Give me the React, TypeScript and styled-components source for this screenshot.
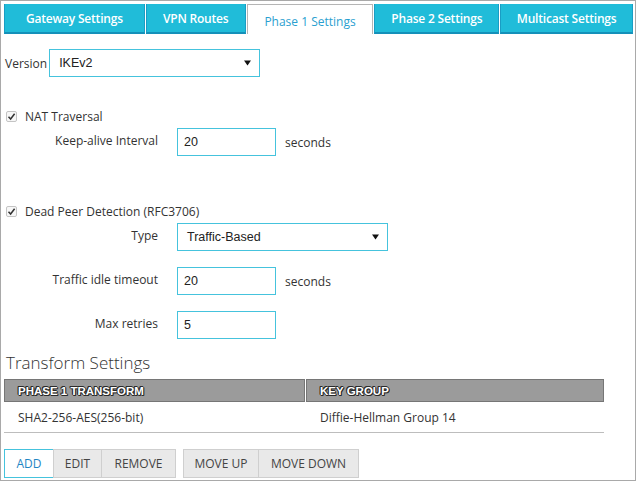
import React from "react";
import styled, { createGlobalStyle } from "styled-components";

const Global = createGlobalStyle`
  html, body { margin: 0; padding: 0; background: #fff; }
  * { box-sizing: border-box; }
`;

const Frame = styled.div`
  width: 636px;
  height: 481px;
  border: 1px solid #a9a9a9;
  padding: 3px 2px 0 3px;
  font-family: "Open Sans", "Liberation Sans", sans-serif;
  font-size: 12px;
  color: #333;
  overflow: hidden;
`;

const TabBar = styled.div`
  display: flex;
  gap: 1px;
  height: 30px;
`;

const Tab = styled.div<{ $w: number; $active?: boolean }>`
  width: ${(p) => p.$w}px;
  display: flex;
  align-items: center;
  justify-content: center;
  font-size: 12px;
  ${(p) =>
    p.$active
      ? `
    background: #fff;
    color: #2a9fd0;
    font-weight: 400;
    border: 1px solid #b5b5b5;
    border-bottom: none;
    padding-top: 3px;
  `
      : `
    background: #20bcd9;
    color: #fff;
    font-weight: 600;
    border: 1px solid #1a9dc4;
    border-top: none;
    border-bottom: 2px solid #1590b9;
    letter-spacing: -0.2px;
  `}
`;

const Content = styled.div``;

const Row = styled.div<{ $mt: number }>`
  display: flex;
  align-items: center;
  margin-top: ${(p) => p.$mt}px;
`;

const Label = styled.span`
  font-size: 12px;
  color: #333;
  margin-right: 2px;
  margin-left: 1px;
`;

const FieldLabel = styled.span`
  width: 154px;
  text-align: right;
  font-size: 12px;
  color: #333;
  margin-right: 19px;
  padding-bottom: 4px;
`;

const SelectBox = styled.div<{ $w: number }>`
  width: ${(p) => p.$w}px;
  height: 28px;
  border: 1px solid #45c3dd;
  display: flex;
  align-items: center;
  justify-content: space-between;
  padding: 0 8px 0 9px;
  font-family: "Liberation Sans", Arial, sans-serif;
  font-size: 12.5px;
  color: #222;
`;

const TextBox = styled.div`
  width: 99px;
  height: 28px;
  border: 1px solid #45c3dd;
  display: flex;
  align-items: center;
  padding-left: 6px;
  font-family: "Liberation Sans", Arial, sans-serif;
  font-size: 12.5px;
  color: #222;
`;

const Unit = styled.span`
  margin-left: 9px;
  font-size: 12px;
  color: #333;
`;

const Check = styled.span`
  width: 11px;
  height: 11px;
  border: 1px solid #c4c4c4;
  border-radius: 2px;
  background: #f7f7f7;
  display: inline-flex;
  align-items: center;
  justify-content: center;
  margin-right: 8px;
  margin-left: 2px;
`;

const CheckText = styled.span`
  font-size: 12px;
  color: #333;
`;

const Heading = styled.div`
  margin-top: 13px;
  margin-left: 2px;
  font-size: 17px;
  font-weight: 300;
  color: #333;
  line-height: 22px;
`;

const Table = styled.div`
  margin-top: 5px;
  width: 600px;
`;

const HeadRow = styled.div`
  display: grid;
  grid-template-columns: 301px 1fr;
  gap: 1px;
  height: 23px;
`;

const HeadCell = styled.div`
  background: #9b9b9b;
  border: 1px solid #767676;
  display: flex;
  align-items: center;
  padding-left: 13px;
  font-family: "Liberation Sans", Arial, sans-serif;
  font-weight: 700;
  font-size: 11.5px;
  color: #fff;
  text-shadow: 1px 0 0 #2a2a2a, -1px 0 0 #2a2a2a, 0 1px 0 #2a2a2a, 0 -1px 0 #2a2a2a,
    1px 1px 0 #2a2a2a, -1px -1px 0 #2a2a2a;
`;

const BodyRow = styled.div`
  display: grid;
  grid-template-columns: 302px 1fr;
  height: 31px;
  border-bottom: 1px solid #bdbdbd;
  align-items: center;
`;

const BodyCell = styled.div`
  padding-left: 14px;
  font-size: 12px;
  color: #333;
`;

const Buttons = styled.div`
  display: flex;
  gap: 8px;
  margin-top: 16px;
`;

const Group = styled.div`
  display: flex;
`;

const Btn = styled.div<{ $w: number; $primary?: boolean }>`
  width: ${(p) => p.$w}px;
  height: 29px;
  display: flex;
  align-items: center;
  justify-content: center;
  font-size: 12px;
  text-transform: uppercase;
  ${(p) =>
    p.$primary
      ? `background:#fff;border:1px solid #45c3dd;color:#1f86c4;`
      : `background:#e9e9e9;border:1px solid #cfcfcf;color:#444;margin-left:-1px;`}
`;

const Arrow = () => (
  <svg width="7" height="6" viewBox="0 0 7 6">
    <path d="M0 0.5 H7 L3.5 5.5 Z" fill="#111" />
  </svg>
);

const Tick = () => (
  <svg width="9" height="9" viewBox="0 0 9 9">
    <path d="M1.5 4.8 L3.6 7 L7.6 1.8" stroke="#333" strokeWidth="1.5" fill="none" />
  </svg>
);

export default function App() {
  return (
    <>
      <Global />
      <Frame>
        <TabBar>
          <Tab $w={141}>Gateway Settings</Tab>
          <Tab $w={100}>VPN Routes</Tab>
          <Tab $w={127} $active>Phase 1 Settings</Tab>
          <Tab $w={125}>Phase 2 Settings</Tab>
          <Tab $w={133}>Multicast Settings</Tab>
        </TabBar>
        <Content>
          <Row $mt={15}>
            <Label>Version</Label>
            <SelectBox $w={211}>
              <span>IKEv2</span>
              <Arrow />
            </SelectBox>
          </Row>
          <Row $mt={31}>
            <Check><Tick /></Check>
            <CheckText>NAT Traversal</CheckText>
          </Row>
          <Row $mt={3}>
            <FieldLabel>Keep-alive Interval</FieldLabel>
            <TextBox>20</TextBox>
            <Unit>seconds</Unit>
          </Row>
          <Row $mt={47}>
            <Check><Tick /></Check>
            <CheckText>Dead Peer Detection (RFC3706)</CheckText>
          </Row>
          <Row $mt={3}>
            <FieldLabel>Type</FieldLabel>
            <SelectBox $w={211}>
              <span>Traffic-Based</span>
              <Arrow />
            </SelectBox>
          </Row>
          <Row $mt={16}>
            <FieldLabel>Traffic idle timeout</FieldLabel>
            <TextBox>20</TextBox>
            <Unit>seconds</Unit>
          </Row>
          <Row $mt={16}>
            <FieldLabel>Max retries</FieldLabel>
            <TextBox>5</TextBox>
          </Row>
          <Heading>Transform Settings</Heading>
          <Table>
            <HeadRow>
              <HeadCell>PHASE 1 TRANSFORM</HeadCell>
              <HeadCell>KEY GROUP</HeadCell>
            </HeadRow>
            <BodyRow>
              <BodyCell>SHA2-256-AES(256-bit)</BodyCell>
              <BodyCell>Diffie-Hellman Group 14</BodyCell>
            </BodyRow>
          </Table>
          <Buttons>
            <Group>
              <Btn $w={50} $primary>Add</Btn>
              <Btn $w={49}>Edit</Btn>
              <Btn $w={75}>Remove</Btn>
            </Group>
            <Group>
              <Btn $w={76}>Move Up</Btn>
              <Btn $w={101}>Move Down</Btn>
            </Group>
          </Buttons>
        </Content>
      </Frame>
    </>
  );
}
